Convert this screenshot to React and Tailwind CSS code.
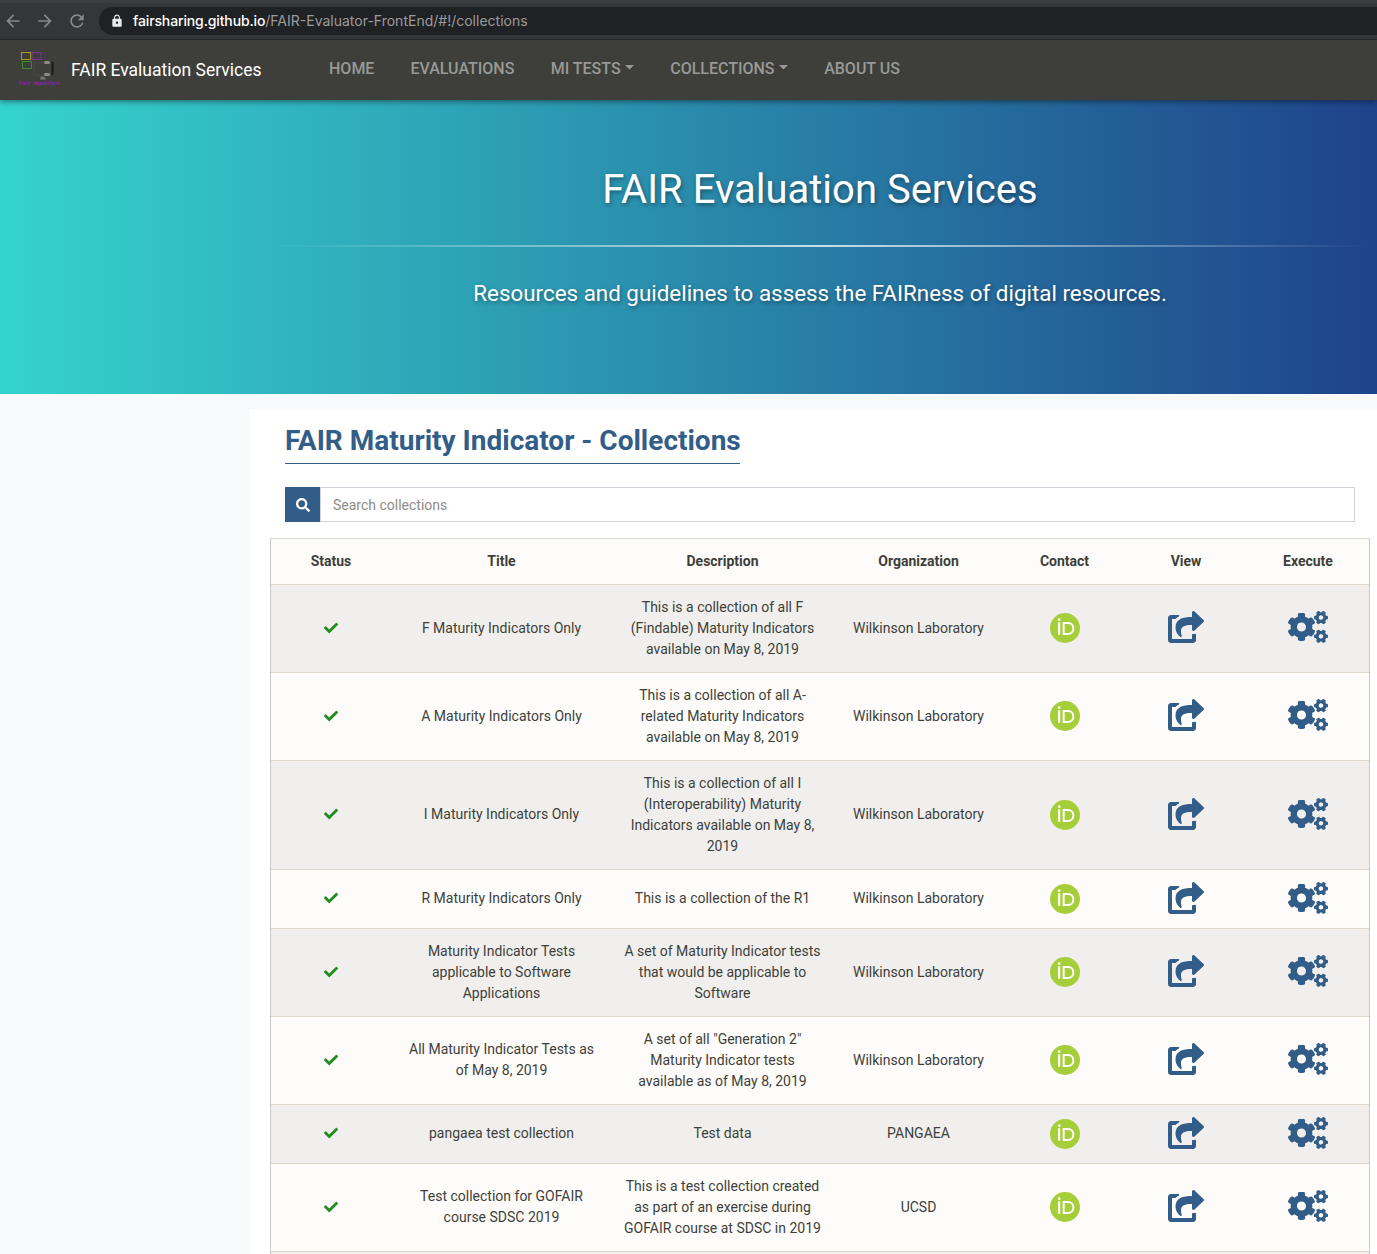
import { FaCheck, FaCogs, FaSearch, FaShareSquare } from "react-icons/fa";
import { MdArrowBack, MdArrowForward, MdLock, MdRefresh } from "react-icons/md";

const rows = [
  ["F Maturity Indicators Only", "This is a collection of all F\n(Findable) Maturity Indicators\navailable on May 8, 2019", "Wilkinson Laboratory", "h-[88px]"],
  ["A Maturity Indicators Only", "This is a collection of all A-\nrelated Maturity Indicators\navailable on May 8, 2019", "Wilkinson Laboratory", "h-[88px]"],
  ["I Maturity Indicators Only", "This is a collection of all I\n(Interoperability) Maturity\nIndicators available on May 8,\n2019", "Wilkinson Laboratory", "h-[109px]"],
  ["R Maturity Indicators Only", "This is a collection of the R1", "Wilkinson Laboratory", "h-[59px]"],
  ["Maturity Indicator Tests\napplicable to Software\nApplications", "A set of Maturity Indicator tests\nthat would be applicable to\nSoftware", "Wilkinson Laboratory", "h-[88px]"],
  ["All Maturity Indicator Tests as\nof May 8, 2019", 'A set of all "Generation 2"\nMaturity Indicator tests\navailable as of May 8, 2019', "Wilkinson Laboratory", "h-[88px]"],
  ["pangaea test collection", "Test data", "PANGAEA", "h-[59px]"],
  ["Test collection for GOFAIR\ncourse SDSC 2019", "This is a test collection created\nas part of an exercise during\nGOFAIR course at SDSC in 2019", "UCSD", "h-[88px]"],
];

const columns = "grid grid-cols-[120px_221px_221px_171px_121px_122px_122px] items-center justify-items-center border-t border-[#dfd7ca]";

function BrowserBar() {
  return (
    <div className="flex h-10 items-center border-t-[3px] border-b border-t-[#3c3d41] border-b-[#28292c] bg-[#35363a] pl-[3px]">
      <MdArrowBack className="size-5 text-[#87888b]" />
      <MdArrowForward className="ml-3 size-5 text-[#87888b]" />
      <MdRefresh className="ml-3 size-5 text-[#87888b]" />
      <div className="ml-3 flex h-7 flex-1 items-center rounded-l-full bg-[#202124] pl-[11px] font-[Inter,sans-serif] text-[14px]">
        <MdLock className="size-3.5 text-[#e8eaed]" />
        <span className="mb-[2px] ml-[9px] whitespace-nowrap text-[#9a9b9d]">
          <span className="font-medium tracking-[-0.13px] text-white">fairsharing.github.io</span>/FAIR-Evaluator-FrontEnd/#!/collections
        </span>
      </div>
    </div>
  );
}

function Logo() {
  return (
    <svg className="mb-[2px] ml-[18px] h-9 w-[42px] shrink-0" viewBox="0 0 42 36" fill="none">
      <rect x="3.5" y="1.5" width="9" height="7" stroke="#a39b1d" />
      <rect x="14" y="1.5" width="9" height="7" stroke="#832f9c" />
      <rect x="4.5" y="10.5" width="9" height="7" stroke="#3f8a24" />
      <rect x="16" y="12" width="17" height="12" stroke="#484845" />
      <rect x="26" y="10" width="6" height="3" rx="1.5" fill="#8b8b89" />
      <rect x="26" y="22" width="6" height="3" rx="1.5" fill="#8b8b89" />
      <path d="M34.5 11v13" stroke="#171716" strokeWidth="2" />
      <path d="M22 28.5l1-3h3l2 3z" fill="#777775" />
      <text x="0.5" y="34" textLength="41" lengthAdjust="spacingAndGlyphs" fontSize="6" fontWeight="bold" fontFamily="DejaVu Sans" fill="#7b2c94">fair metrics</text>
    </svg>
  );
}

function Caret() {
  return (
    <svg className="mb-1 ml-[4.6px] inline-block h-[5px] w-[9px]" viewBox="0 0 9 5">
      <path d="M0 0h9L4.5 4.6z" fill="currentColor" />
    </svg>
  );
}

function OrcidIcon() {
  return (
    <svg className="ml-px size-[30px]" viewBox="0 0 256 256" fill="none">
      <circle cx="128" cy="128" r="128" fill="#a6ce39" />
      <rect x="69" y="79" width="18" height="107" fill="#fff" />
      <circle cx="78.6" cy="56.8" r="11" fill="#fff" />
      <path d="M116.6 86v93.3h33c33 0 50-21.3 50-46.6 0-23.4-16-46.7-50-46.7z" stroke="#fff" strokeWidth="17" />
    </svg>
  );
}

function NavBar() {
  return (
    <nav className="relative z-10 flex h-[60px] items-center bg-[#3e3f3a] shadow-[0_2px_5px_rgba(0,0,0,0.4)]">
      <Logo />
      <span className="ml-[11px] w-[258px] text-[17.5px] text-white">FAIR Evaluation Services</span>
      <div className="flex gap-9 pb-[2px] text-[16px] leading-6 font-medium whitespace-nowrap text-[#989996]">
        <a>HOME</a>
        <a className="mr-[0.3px]">EVALUATIONS</a>
        <a>MI TESTS<Caret /></a>
        <a>COLLECTIONS<Caret /></a>
        <a>ABOUT US</a>
      </div>
    </nav>
  );
}

function Hero() {
  return (
    <header className="h-[294px] bg-linear-to-r/srgb from-[#35d3cd] to-[#1f438a] pl-[270px] text-center text-white [text-shadow:1px_2px_4px_rgba(0,0,0,0.4)]">
      <div className="w-[1100px]">
        <h1 className="pt-[66px] text-[40px] leading-[48px]">FAIR Evaluation Services</h1>
        <div className="mt-[31px] h-[2px] bg-linear-to-r from-transparent via-white/75 to-transparent" />
        <p className="mt-[30px] text-[22.4px] leading-[33px]">Resources and guidelines to assess the FAIRness of digital resources.</p>
      </div>
    </header>
  );
}

function Row({ row, index }) {
  const [title, description, organization, height] = row;
  return (
    <div className={`${columns} ${height} pb-px text-center ${index % 2 ? "bg-[#fdfcfa]" : "bg-[#f0efed]"}`}>
      <FaCheck className="mb-px size-3.5 text-[#228b22]" />
      <div className="whitespace-pre">{title}</div>
      <div className="whitespace-pre">{description}</div>
      <div>{organization}</div>
      <OrcidIcon />
      <FaShareSquare className="mb-[2px] h-8 w-9 text-[#325d88]" />
      <FaCogs className="mb-[2px] h-8 w-10 text-[#325d88]" />
    </div>
  );
}

export default function App() {
  return (
    <div className="h-[1254px] w-[1377px] overflow-hidden bg-[#f8f9fb] font-[Roboto,sans-serif] text-[14px] leading-[21px] text-[#3e3f3a]">
      <BrowserBar />
      <NavBar />
      <Hero />
      <main className="mt-[15px] ml-[250px] h-[845px] bg-white pt-3">
        <h2 className="ml-[35px] flex h-[43px] w-[455px] border-b border-[#325d88] pt-[1px] text-[28px] leading-[38px] font-bold whitespace-nowrap text-[#325d88]">
          FAIR Maturity Indicator - Collections
        </h2>
        <div className="mt-[23px] ml-[35px] flex h-[35px] w-[1070px]">
          <div className="flex w-[35px] items-center justify-center bg-[#325d88]">
            <FaSearch className="size-3.5 text-white" />
          </div>
          <div className="flex flex-1 items-center border border-[#ced4da] pt-[2px] pl-3 text-[#8e8c84]">Search collections</div>
        </div>
        <div className="mt-4 ml-5 w-[1100px] border-x border-[#c9cacc]">
          <div className={`${columns} h-[46px] bg-[#fdfcfa] font-bold`}>
            {["Status", "Title", "Description", "Organization", "Contact", "View", "Execute"].map((name) => (
              <div key={name}>{name}</div>
            ))}
          </div>
          {rows.map((row, index) => (
            <Row key={row[0]} row={row} index={index} />
          ))}
          <div className="h-[3px] border-t border-[#dfd7ca] bg-[#f0efed]" />
        </div>
      </main>
    </div>
  );
}
